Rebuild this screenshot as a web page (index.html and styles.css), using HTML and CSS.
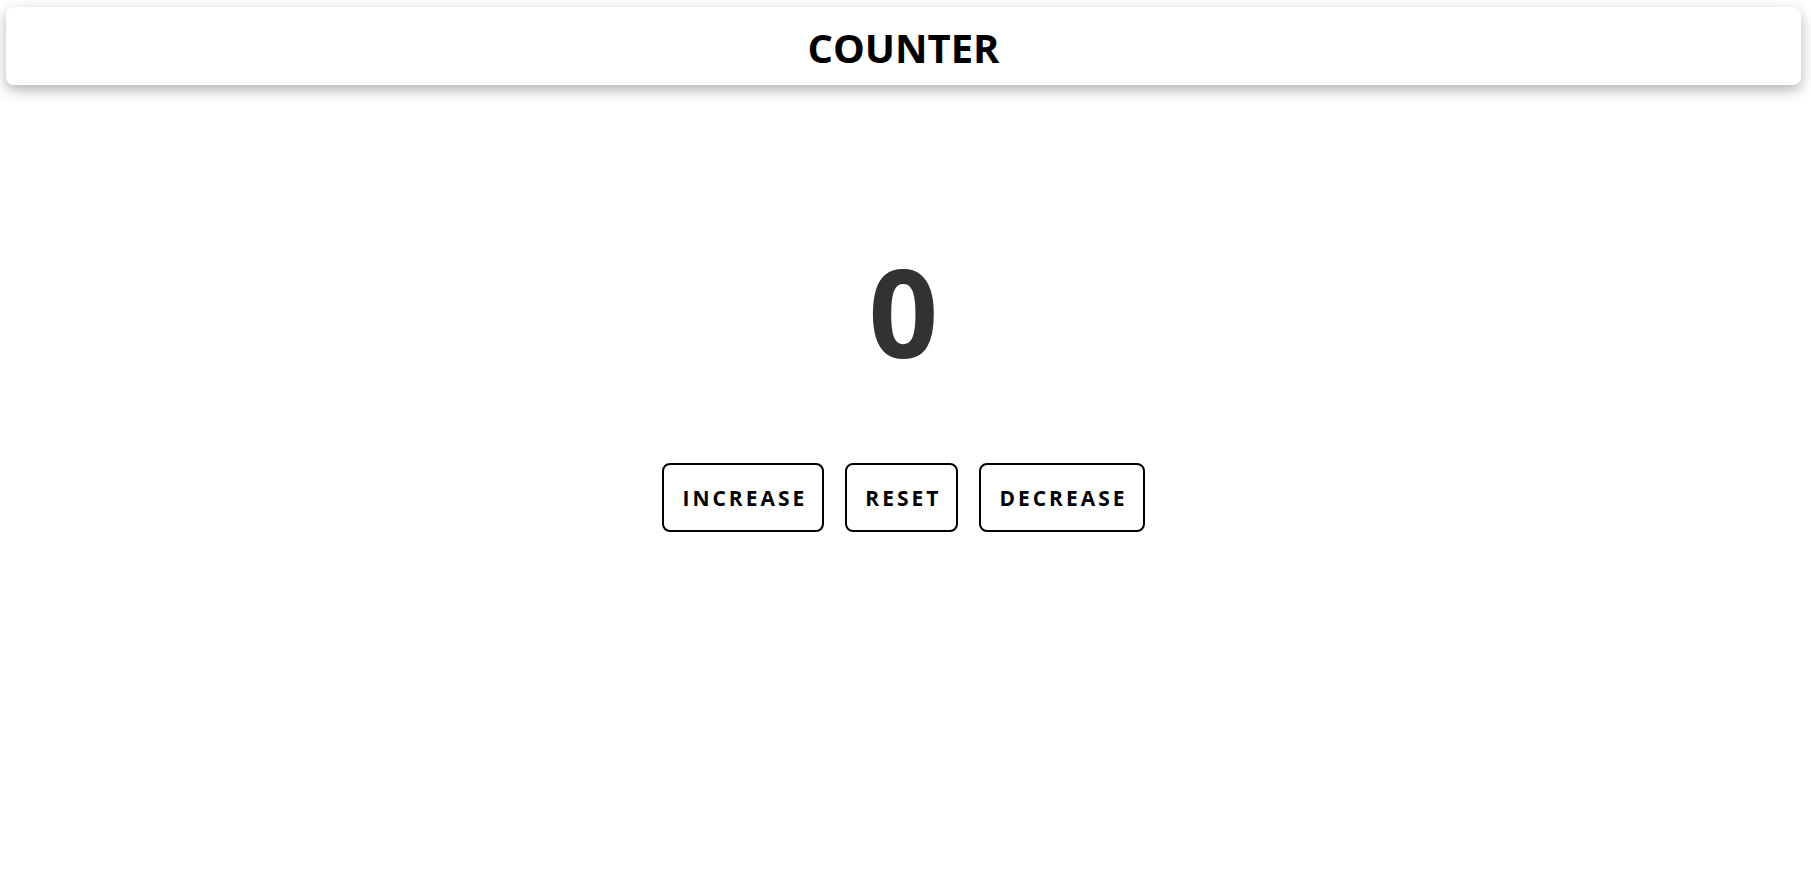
FILE: index.html
```html
<!DOCTYPE html>
<html lang="en">
<head>
<meta charset="utf-8">
<title>Counter</title>
<link rel="stylesheet" href="styles.css">
</head>
<body>
<header class="topbar"><h1 class="title">COUNTER</h1></header>
<main class="counter">
  <div class="value">0</div>
  <div class="buttons">
    <button class="btn">INCREASE</button>
    <button class="btn">RESET</button>
    <button class="btn">DECREASE</button>
  </div>
</main>
</body>
</html>
```

FILE: styles.css
```css
* { box-sizing: border-box; }
html, body { margin: 0; padding: 0; background: #fff; }
body {
  font-family: "Open Sans", "Noto Sans", sans-serif;
  color: #000;
  padding: 7px 10px 0 6px;
}
.topbar {
  height: 78px;
  background: #fff;
  border-radius: 8px;
  box-shadow: 0 5px 14px rgba(0,0,0,0.3);
  display: flex;
  align-items: center;
  justify-content: center;
  padding-top: 3px;
}
.title {
  margin: 0;
  font-size: 40px;
  font-weight: 700;
  line-height: 1;
}
.counter {
  display: flex;
  flex-direction: column;
  align-items: center;
  padding-top: 165px;
}
.value {
  font-size: 122px;
  font-weight: 700;
  color: #333132;
  line-height: 1;
}
.buttons {
  display: flex;
  gap: 21px;
  margin-top: 91px;
}
.btn {
  font-family: "Open Sans", "Noto Sans", sans-serif;
  font-weight: 700;
  font-size: 21px;
  letter-spacing: 3px;
  background: #fff;
  color: #000;
  border: 2px solid #000;
  border-radius: 8px;
  height: 69px;
  padding: 0 15px 0 18px;
}
```
